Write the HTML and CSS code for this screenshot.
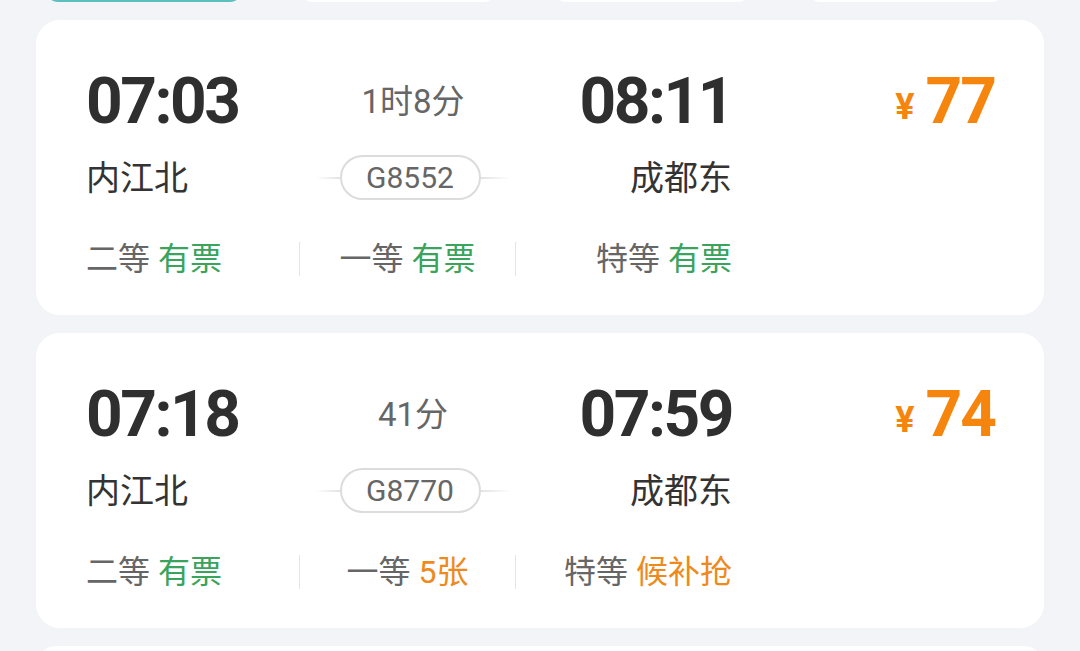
FILE: index.html
```html
<!DOCTYPE html>
<html lang="zh-CN">
<head>
<meta charset="utf-8">
<title>车次列表</title>
<link rel="stylesheet" href="styles.css">
</head>
<body>
<div class="tabs">
  <div class="tab tab-active"></div>
  <div class="tab"></div>
  <div class="tab"></div>
  <div class="tab"></div>
</div>
<div class="list">
  <div class="card">
    <div class="main">
      <div class="col-dep">
        <div class="time">07:03</div>
        <div class="station">内江北</div>
      </div>
      <div class="col-mid">
        <div class="duration">1时8分</div>
        <div class="train-wrap"><span class="line line-l"></span><span class="train">G8552</span><span class="line line-r"></span></div>
      </div>
      <div class="col-arr">
        <div class="time">08:11</div>
        <div class="station">成都东</div>
      </div>
      <div class="col-price">
        <span class="yen">¥</span><span class="amount">77</span>
      </div>
    </div>
    <div class="seats">
      <div class="seat seat-l">二等 <span class="ok">有票</span></div>
      <div class="seat seat-c">一等 <span class="ok">有票</span></div>
      <div class="seat seat-r">特等 <span class="ok">有票</span></div>
    </div>
  </div>
  <div class="card">
    <div class="main">
      <div class="col-dep">
        <div class="time">07:18</div>
        <div class="station">内江北</div>
      </div>
      <div class="col-mid">
        <div class="duration">41分</div>
        <div class="train-wrap"><span class="line line-l"></span><span class="train">G8770</span><span class="line line-r"></span></div>
      </div>
      <div class="col-arr">
        <div class="time">07:59</div>
        <div class="station">成都东</div>
      </div>
      <div class="col-price">
        <span class="yen">¥</span><span class="amount">74</span>
      </div>
    </div>
    <div class="seats">
      <div class="seat seat-l">二等 <span class="ok">有票</span></div>
      <div class="seat seat-c">一等 <span class="warn">5张</span></div>
      <div class="seat seat-r">特等 <span class="warn">候补抢</span></div>
    </div>
  </div>
  <div class="card card-last"></div>
</div>
</body>
</html>
```

FILE: styles.css
```css
* { box-sizing: border-box; }
html, body { margin: 0; padding: 0; }
body {
  background: #f3f4f8;
  font-family: Roboto, "Noto Sans CJK SC", sans-serif;
  color: #333;
  overflow: hidden;
  height: 651px;
}
.tabs {
  display: flex;
  gap: 58px;
  padding-left: 46px;
  margin-top: -38px;
  height: 40px;
}
.tab {
  width: 196px;
  height: 40px;
  border-radius: 12px;
  background: #fff;
}
.tab-active {
  background: #eaf8f7;
  border: 2px solid #5bbfbd;
}
.list {
  display: flex;
  flex-direction: column;
  gap: 18px;
  padding: 18px 36px 0 36px;
  height: 649px;
  overflow: hidden;
}
.card {
  background: #fff;
  border-radius: 24px;
  height: 295px;
  flex-shrink: 0;
  padding: 0 49px 0 50px;
}
.card-last { height: 40px; }
.main {
  display: flex;
  padding-top: 46px;
  height: 213px;
}
.col-dep { width: 230px; }
.col-mid {
  width: 194px;
  display: flex;
  flex-direction: column;
  align-items: center;
}
.col-arr {
  width: 222px;
  display: flex;
  flex-direction: column;
  align-items: flex-end;
}
.col-price {
  flex: 1;
  display: flex;
  justify-content: flex-end;
  align-items: flex-start;
  color: #f5850c;
  font-weight: 700;
}
.time {
  font-size: 64px;
  font-weight: 700;
  line-height: 72px;
  letter-spacing: -2.5px;
  color: #2f2f2f;
}
.station {
  font-size: 34px;
  line-height: 40px;
  margin-top: 20px;
  color: #333;
}
.duration {
  font-size: 33px;
  line-height: 72px;
  color: #666;
}
.train-wrap {
  display: flex;
  align-items: center;
  margin-top: 17px;
}
.line {
  display: block;
  height: 2px;
  width: 24px;
}
.line-l { background: linear-gradient(to right, rgba(225,225,225,0), #e2e2e2); }
.line-r { width: 30px; background: linear-gradient(to right, #e2e2e2, rgba(225,225,225,0)); }
.train {
  display: block;
  width: 141px;
  height: 45px;
  border: 2px solid #dcdcdc;
  border-radius: 23px;
  text-align: center;
  font-size: 30px;
  line-height: 41px;
  color: #666;
}
.yen {
  font-size: 36px;
  line-height: 40px;
  margin-top: 21px;
  margin-right: 11px;
}
.amount {
  font-size: 64px;
  line-height: 72px;
  letter-spacing: -2px;
}
.seats {
  display: flex;
  align-items: center;
  height: 52px;
}
.seat {
  font-size: 32px;
  color: #666;
  line-height: 34px;
}
.seat-l {
  width: 214px;
  border-right: 1px solid #e4e4e4;
}
.seat-c {
  width: 216px;
  text-align: center;
  border-right: 1px solid #e4e4e4;
}
.seat-r {
  width: 216px;
  text-align: right;
}
.ok { color: #3aa35c; }
.warn { color: #ee8a1c; }
```
